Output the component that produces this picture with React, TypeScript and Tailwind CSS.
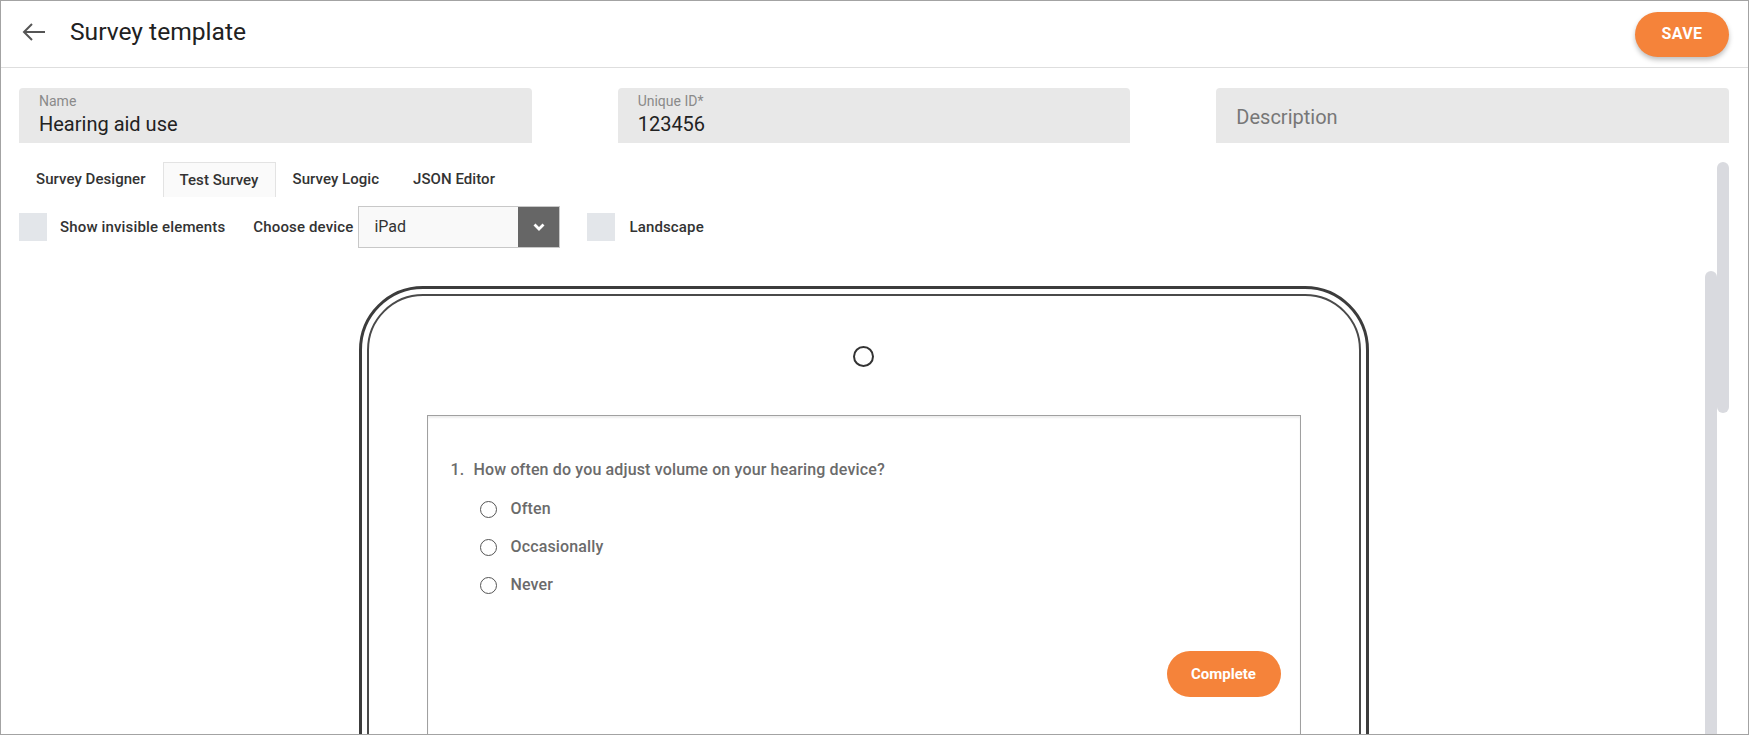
import React from "react";

function Field({ label, value, placeholder }: { label?: string; value?: string; placeholder?: string }) {
  return (
    <div className="h-[55px] bg-[#e8e8e8] rounded-t-[4px] px-[20px]">
      {placeholder ? (
        <div className="pt-[17px] text-[20px] leading-[24px] text-[#777]">{placeholder}</div>
      ) : (
        <>
          <div className="pt-[5px] text-[14px] leading-[16px] text-[#8a8a8a]">{label}</div>
          <div className="mt-[3px] text-[20px] leading-[24px] text-[#222]">{value}</div>
        </>
      )}
    </div>
  );
}

function Radio({ label }: { label: string }) {
  return (
    <div className="h-[38px] flex items-center">
      <div className="w-[17px] h-[17px] rounded-full border-[1.5px] border-[#555]" />
      <span className="ml-[14px] text-[16px] tracking-[0.15px] font-medium text-[#6b6b6b]">{label}</span>
    </div>
  );
}

export default function App() {
  return (
    <div
      className="relative w-[1749px] h-[735px] overflow-hidden border border-[#a3a3a3] bg-white"
      style={{ fontFamily: "Roboto, 'Noto Sans', sans-serif" }}
    >
      {/* Header */}
      <div className="h-[67px] flex items-center border-b border-[#dedede] pl-[21px] pr-[19px]">
        <svg width="24" height="18" viewBox="0 0 24 18" className="shrink-0 mb-[4px]">
          <path d="M2 9 H23 M10 1 L2 9 L10 17" fill="none" stroke="#555" strokeWidth="2" />
        </svg>
        <div className="ml-[24px] mb-[4px] text-[24.6px] text-[#212121] leading-none">Survey template</div>
        <div className="flex-1" />
        <button className="w-[94px] h-[45px] rounded-full bg-[#f5833a] text-white font-bold text-[16px] tracking-wide shadow-[0_3px_5px_rgba(0,0,0,0.25)]">
          SAVE
        </button>
      </div>

      {/* Fields */}
      <div className="mt-[20px] pl-[18px] pr-[19px] grid grid-cols-3 gap-[86px]">
        <Field label="Name" value="Hearing aid use" />
        <Field label="Unique ID*" value="123456" />
        <Field placeholder="Description" />
      </div>

      {/* Tabs */}
      <div className="mt-[19px] pl-[18px] flex text-[15px] tracking-[0.05px] font-medium text-[#333]">
        <div className="h-[35px] px-[16px] flex items-center border border-transparent">Survey Designer</div>
        <div className="h-[35px] px-[16px] flex items-center bg-[#fafafa] border border-b-0 border-[#e3e3e3]">Test Survey</div>
        <div className="h-[35px] px-[16px] flex items-center border border-transparent">Survey Logic</div>
        <div className="h-[35px] px-[16px] flex items-center border border-transparent">JSON Editor</div>
      </div>

      {/* Toolbar */}
      <div className="mt-[9px] pl-[18px] flex items-center text-[15px] tracking-[0.15px] font-medium text-[#333]">
        <div className="w-[28px] h-[28px] bg-[#e3e6ea]" />
        <span className="ml-[13px]">Show invisible elements</span>
        <span className="ml-[28px]">Choose device</span>
        <div className="ml-[5px] w-[202px] h-[42px] border border-[#c8c8c8] bg-[#f9f9f9] flex">
          <div className="flex-1 flex items-center pl-[15px] text-[16px] tracking-normal font-normal text-[#333]">iPad</div>
          <div className="w-[41px] h-full bg-[#666] flex items-center justify-center">
            <svg width="12" height="8" viewBox="0 0 12 8">
              <path d="M1.5 1.5 L6 6 L10.5 1.5" fill="none" stroke="#fff" strokeWidth="2.8" />
            </svg>
          </div>
        </div>
        <div className="ml-[27px] w-[28px] h-[28px] bg-[#e3e6ea]" />
        <span className="ml-[14px]">Landscape</span>
      </div>

      {/* Device preview */}
      <div className="mt-[38px] pl-[18px] pr-[40px] flex justify-center">
        <div className="w-[1010px] h-[700px] shrink-0 border-[3px] border-[#3c3c3c] rounded-[64px] p-[5px]">
          <div className="h-full border-2 border-[#4a4a4a] rounded-[56px] flex flex-col items-center">
            <div className="mt-[50px] w-[21px] h-[21px] rounded-full border-2 border-[#333]" />
            <div className="mt-[48px] w-[874px] flex-1 border border-[#a0a0a0] shadow-[inset_0_2px_2px_rgba(0,0,0,0.07)] pl-[23px] pr-[19px] pt-[44px]">
              <div className="flex items-center text-[16px] tracking-[0.15px] leading-[20px] font-medium text-[#6b6b6b]">
                <span className="w-[23px]">1.</span>
                <span>How often do you adjust volume on your hearing device?</span>
              </div>
              <div className="mt-[10px] ml-[29px]">
                <Radio label="Often" />
                <Radio label="Occasionally" />
                <Radio label="Never" />
              </div>
              <div className="mt-[47px] flex justify-end">
                <button className="w-[114px] h-[46px] rounded-full bg-[#f5833a] text-white font-bold text-[15px]">
                  Complete
                </button>
              </div>
            </div>
          </div>
        </div>
      </div>

      {/* Scrollbars */}
      <div className="absolute left-[1716px] top-[161px] w-[12px] h-[251px] rounded-full bg-[#d9dadf]" />
      <div className="absolute left-[1704px] top-[270px] w-[12px] h-[500px] rounded-t-full bg-[#d9dadf]" />
    </div>
  );
}
